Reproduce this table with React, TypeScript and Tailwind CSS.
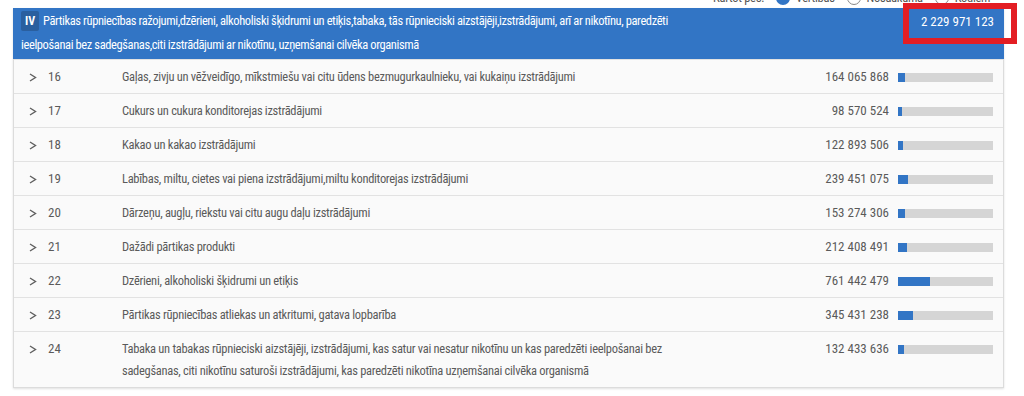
const TOTAL = 2229971123

const rows = [
  { code: '16', name: 'Gaļas, zivju un vēžveidīgo, mīkstmiešu vai citu ūdens bezmugurkaulnieku, vai kukaiņu izstrādājumi', value: 164065868 },
  { code: '17', name: 'Cukurs un cukura konditorejas izstrādājumi', value: 98570524 },
  { code: '18', name: 'Kakao un kakao izstrādājumi', value: 122893506 },
  { code: '19', name: 'Labības, miltu, cietes vai piena izstrādājumi,miltu konditorejas izstrādājumi', value: 239451075 },
  { code: '20', name: 'Dārzeņu, augļu, riekstu vai citu augu daļu izstrādājumi', value: 153274306 },
  { code: '21', name: 'Dažādi pārtikas produkti', value: 212408491 },
  { code: '22', name: 'Dzērieni, alkoholiski šķidrumi un etiķis', value: 761442479 },
  { code: '23', name: 'Pārtikas rūpniecības atliekas un atkritumi, gatava lopbarība', value: 345431238 },
  {
    code: '24',
    name: 'Tabaka un tabakas rūpnieciski aizstājēji, izstrādājumi, kas satur vai nesatur nikotīnu un kas paredzēti ieelpošanai bez sadegšanas, citi nikotīnu saturoši izstrādājumi, kas paredzēti nikotīna uzņemšanai cilvēka organismā',
    value: 132433636,
  },
]

const fmt = (n: number) => n.toString().replace(/\B(?=(\d{3})+(?!\d))/g, ' ')

function Chevron() {
  return (
    <svg width="8" height="9" viewBox="0 0 8 9" fill="none">
      <polyline points="1,1 6.5,4.5 1,8" stroke="#5f5f5f" strokeWidth="1.4" />
    </svg>
  )
}

function Radio({ checked, label }: { checked?: boolean; label: string }) {
  return (
    <div className="flex items-center gap-[6px]">
      <span
        className={
          checked
            ? 'w-[14px] h-[14px] rounded-full bg-[#3275c5]'
            : 'w-[14px] h-[14px] rounded-full border border-[#888] bg-white'
        }
      />
      <span>{label}</span>
    </div>
  )
}

export default function App() {
  return (
    <div className="w-[1024px] h-[396px] bg-white overflow-hidden relative font-['Roboto_Condensed','Liberation_Sans_Narrow',Roboto,sans-serif] font-stretch-[75%] text-[12.5px]">
      {/* sort options, mostly scrolled out of view */}
      <div className="h-[8px] overflow-hidden">
        <div className="mt-[-9px] h-[14px] flex items-center gap-[12px] pl-[713px] text-[#555] leading-[14px] tracking-[-0.3px]">
          <span>Kārtot pēc:</span>
          <Radio checked label="Vērtības" />
          <Radio label="Nosaukuma" />
          <Radio label="Kodiem" />
        </div>
      </div>

      <div className="ml-[13px] w-[991px] border border-[#dcdcdc] border-t-0 bg-[#fafafa] shadow-[0_1px_2px_rgba(0,0,0,0.12)]">
        <div className="flex items-start bg-[#3275c5] text-white pl-[8px] pr-[10px] pt-[1px] pb-[2px] leading-[24px] -mx-px">
          <div className="flex-1 tracking-[-0.4px]">
            <div className="flex items-center whitespace-nowrap">
              <span className="w-[18px] h-[20px] rounded-[2px] bg-[#2a5f9f] text-[12px] tracking-normal font-bold flex items-center justify-center mr-[4px]">
                IV
              </span>
              <span>
                Pārtikas rūpniecības ražojumi,dzērieni, alkoholiski šķidrumi un etiķis,tabaka, tās rūpnieciski aizstājēji,izstrādājumi, arī ar nikotīnu, paredzēti
              </span>
            </div>
            <div className="whitespace-nowrap">
              ieelpošanai bez sadegšanas,citi izstrādājumi ar nikotīnu, uzņemšanai cilvēka organismā
            </div>
          </div>
          <div className="pt-[1px] text-[13px]">{fmt(TOTAL)}</div>
        </div>

        {rows.map((r) => (
          <div key={r.code} className="flex items-start border-t border-[#e2e2e2] pt-[6px] pb-[5px] leading-[22px] text-[#5a5a5a]">
            <div className="h-[22px] w-[34px] pl-[15px] flex items-center">
              <Chevron />
            </div>
            <div className="w-[74px] text-[13px]">{r.code}</div>
            <div className="w-[600px] tracking-[-0.3px]">{r.name}</div>
            <div className="flex-1 text-right text-[13px]">{fmt(r.value)}</div>
            <div className="h-[22px] flex items-center pl-[9px] pr-[10px]">
              <div className="w-[95px] h-[9px] bg-[#d5d5d5]">
                <div className="h-full bg-[#3275c5]" style={{ width: `${(r.value / TOTAL) * 100}%` }} />
              </div>
            </div>
          </div>
        ))}
      </div>

      {/* highlight annotation */}
      <div className="absolute left-[903px] top-[3px] w-[114px] h-[41px] border-[6px] border-[#e31e24]" />
    </div>
  )
}
